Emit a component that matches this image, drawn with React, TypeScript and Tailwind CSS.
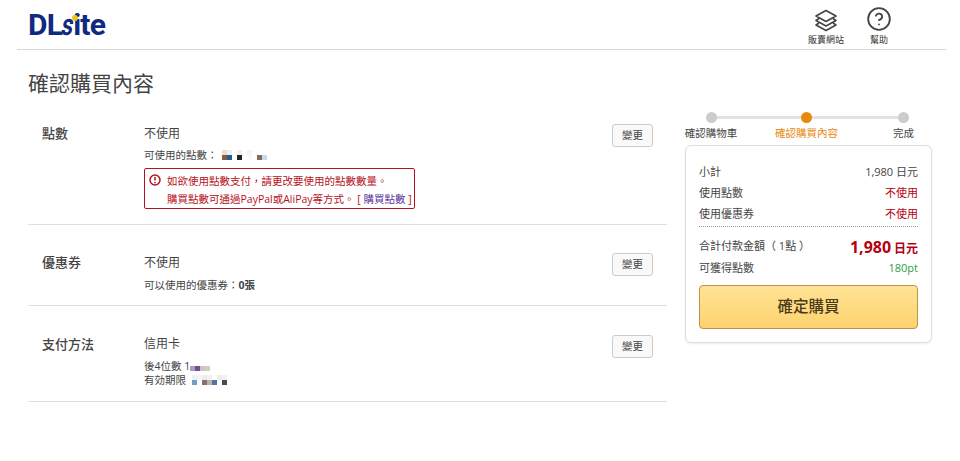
import { CircleHelp } from "lucide-react";

const FONT = "font-['Open_Sans','Noto_Sans_CJK_TC',sans-serif]";

const Censor = ({ top, bottom }: { top: string[]; bottom: string[] }) => (
  <span className="inline-flex flex-col">
    {[top, bottom].map((row, r) => (
      <span key={r} className="flex">
        {row.map((c, i) => (
          <span key={i} className="h-[5px] w-[5px]" style={{ backgroundColor: c }} />
        ))}
      </span>
    ))}
  </span>
);

const LayersIcon = () => (
  <svg width="24" height="23" viewBox="0 0 24 23" fill="none" stroke="#444" strokeWidth="1.6" strokeLinejoin="round">
    <path d="M12 1.5 22 7l-10 5.5L2 7z" />
    <path d="M5 9.5 2 11.5l10 5.5 10-5.5-3-2" />
    <path d="M5 14 2 16l10 5.5L22 16l-3-2" />
  </svg>
);

const Logo = () => (
  <div className="relative mt-[6px] flex h-[38px] font-['Roboto',sans-serif] text-[30px] leading-[38px] font-bold tracking-[-0.8px] text-[#0f2a80]">
    DL
    <span className="inline-block w-[11px] origin-left scale-x-[0.75] -skew-x-[14deg]">s</span>
    ite
    <span className="absolute top-[9px] left-[44px] h-[6px] w-[6px] rounded-full bg-[#f5c21b]" />
  </div>
);

const Header = () => (
  <header className="ml-[17px] flex h-[50px] w-[929px] justify-between border-b border-[#d8d8d8] pl-[11px]">
    <Logo />
    <div className="mr-[56px] flex gap-[24px] pt-[9px] text-[9px] leading-[10px] text-[#333]">
      <div className="flex flex-col items-center gap-[3px]">
        <LayersIcon />
        販賣網站
      </div>
      <div className="flex w-[22px] flex-col items-center gap-[3px]">
        <CircleHelp size={26} strokeWidth={1.7} color="#444" className="-mt-[3px]" />
        幫助
      </div>
    </div>
  </header>
);

const ChangeButton = () => (
  <button
    type="button"
    className="mr-[14px] h-[23px] w-[41px] shrink-0 rounded-[3px] border border-[#ccc] bg-[#f9f9f9] text-[10.5px] text-[#444]"
  >
    變更
  </button>
);

const Section = ({
  label,
  className,
  children,
}: {
  label: string;
  className: string;
  children: React.ReactNode;
}) => (
  <section className={`flex border-b border-[#e0e0e0] ${className}`}>
    <div className="w-[116px] shrink-0 pl-[14px] text-[13px] leading-[18px] font-medium text-[#444]">{label}</div>
    <div className="flex-1">{children}</div>
    <ChangeButton />
  </section>
);

const Row = ({ left, right, rightClass }: { left: string; right: string; rightClass: string }) => (
  <div className="flex h-[21px] items-center justify-between text-[11px]">
    <span className="text-[#444]">{left}</span>
    <span className={rightClass}>{right}</span>
  </div>
);

const Stepper = () => (
  <div className="relative flex h-[35px] text-[10.5px] leading-[14px]">
    <div className="absolute top-[4px] left-[26px] h-[3px] w-[192px] bg-[#e2e2e2]" />
    <div className="relative flex w-[52px] flex-col items-center gap-[3px] text-[#444]">
      <span className="h-[11px] w-[11px] rounded-full bg-[#ccc]" />
      <span className="whitespace-nowrap">確認購物車</span>
    </div>
    <div className="relative ml-[38px] flex w-[63px] flex-col items-center gap-[3px] text-[#e8890c]">
      <span className="h-[11px] w-[11px] rounded-full bg-[#e8890c]" />
      <span className="whitespace-nowrap">確認購買內容</span>
    </div>
    <div className="relative ml-[55px] flex w-[21px] flex-col items-center gap-[3px] text-[#444]">
      <span className="h-[11px] w-[11px] rounded-full bg-[#ccc]" />
      <span className="whitespace-nowrap">完成</span>
    </div>
  </div>
);

const Summary = () => (
  <aside className="mt-[-3px] ml-[18px] w-[247px]">
    <Stepper />
    <div className="mt-[-2px] h-[198px] rounded-[6px] border border-[#ddd] px-[13px] pt-[16px] shadow-[0_1px_2px_rgba(0,0,0,0.08)]">
      <Row left="小計" right="1,980 日元" rightClass="text-[#444]" />
      <Row left="使用點數" right="不使用" rightClass="text-[#b5000f]" />
      <Row left="使用優惠券" right="不使用" rightClass="text-[#b5000f]" />
      <div className="mt-[1px] border-t border-dotted border-[#999]" />
      <div className="mt-[8px] flex h-[23px] items-center justify-between text-[11px] text-[#444]">
        <span>合計付款金額（ 1點 ）</span>
        <span className="font-bold text-[#b5000f]">
          <span className="text-[16px]">1,980</span> <span className="text-[12px]">日元</span>
        </span>
      </div>
      <Row left="可獲得點數" right="180pt" rightClass="text-[#2f9e44]" />
      <button
        type="button"
        className="mt-[6px] h-[44px] w-full rounded-[4px] border border-[#b8954f] bg-gradient-to-b from-[#ffe394] to-[#fdd26e] text-[15.5px] font-medium text-[#4a3a1a]"
      >
        確定購買
      </button>
    </div>
  </aside>
);

export default function App() {
  return (
    <div className={`h-[461px] w-[960px] overflow-hidden bg-white ${FONT}`}>
      <Header />
      <h1 className="mt-[19px] ml-[28px] text-[21px] leading-[28px] font-normal text-[#444]">確認購買內容</h1>
      <div className="mt-[18px] ml-[28px] flex">
        <main className="w-[639px]">
          <Section label="點數" className="h-[110px] pt-[9px]">
            <div className="mt-[1px] text-[12px] leading-[18px] text-[#444]">不使用</div>
            <div className="mt-[5px] flex h-[14px] items-center gap-[4px] text-[10.5px] leading-[14px] text-[#444]">
              可使用的點數：
              <Censor
                top={["#e8ddd5", "#eee", "#fff", "#eee", "#fff", "#f6f4ee", "#fff", "#fff", "#fff"]}
                bottom={["#8a5a44", "#1f5f94", "#fff", "#222", "#fff", "#fbfaf6", "#fff", "#8a6a50", "#b9def5"]}
              />
            </div>
            <div className="mt-[6px] flex h-[41px] w-[271px] gap-[6px] rounded-[2px] border border-[#b5121b] px-[4px] pt-[3px] text-[10.5px] leading-[18px] text-[#b5121b]">
              <svg className="mt-[2px] shrink-0" width="12" height="12" viewBox="0 0 12 12" fill="none" stroke="#b5121b" strokeWidth="1.5">
                <circle cx="6" cy="6" r="5" />
                <path d="M6 3v3.6M6 8v1.2" />
              </svg>
              <div className="whitespace-nowrap">
                如欲使用點數支付，請更改要使用的點數數量。
                <br />
                購買點數可通過PayPal或AliPay等方式。 [ <span className="text-[#5b3a9e]">購買點數</span> ]
              </div>
            </div>
          </Section>
          <Section label="優惠券" className="h-[81px] pt-[28px]">
            <div className="mt-[1px] text-[12px] leading-[18px] text-[#444]">不使用</div>
            <div className="mt-[6px] text-[10.5px] leading-[14px] text-[#444]">
              可以使用的優惠券：<b>0張</b>
            </div>
          </Section>
          <Section label="支付方法" className="h-[96px] pt-[29px]">
            <div className="text-[12px] leading-[18px] text-[#444]">信用卡</div>
            <div className="mt-[6px] flex items-center text-[10.5px] leading-[14px] text-[#444]">
              後4位數 1
              <Censor top={["#fff", "#fff", "#fff", "#fff"]} bottom={["#a89ac0", "#7a4a96", "#c8c8b8", "#cfcfc0"]} />
            </div>
            <div className="flex items-center gap-[6px] text-[10.5px] leading-[14px] text-[#444]">
              有効期限
              <Censor
                top={["#f0f0f4", "#f4f4f4", "#eee", "#f0f0f0", "#fff", "#eee", "#f2f2f2"]}
                bottom={["#6f9fc4", "#fff", "#857078", "#b8b4a8", "#5a70a8", "#fff", "#3f4f5c"]}
              />
            </div>
          </Section>
        </main>
        <Summary />
      </div>
    </div>
  );
}
